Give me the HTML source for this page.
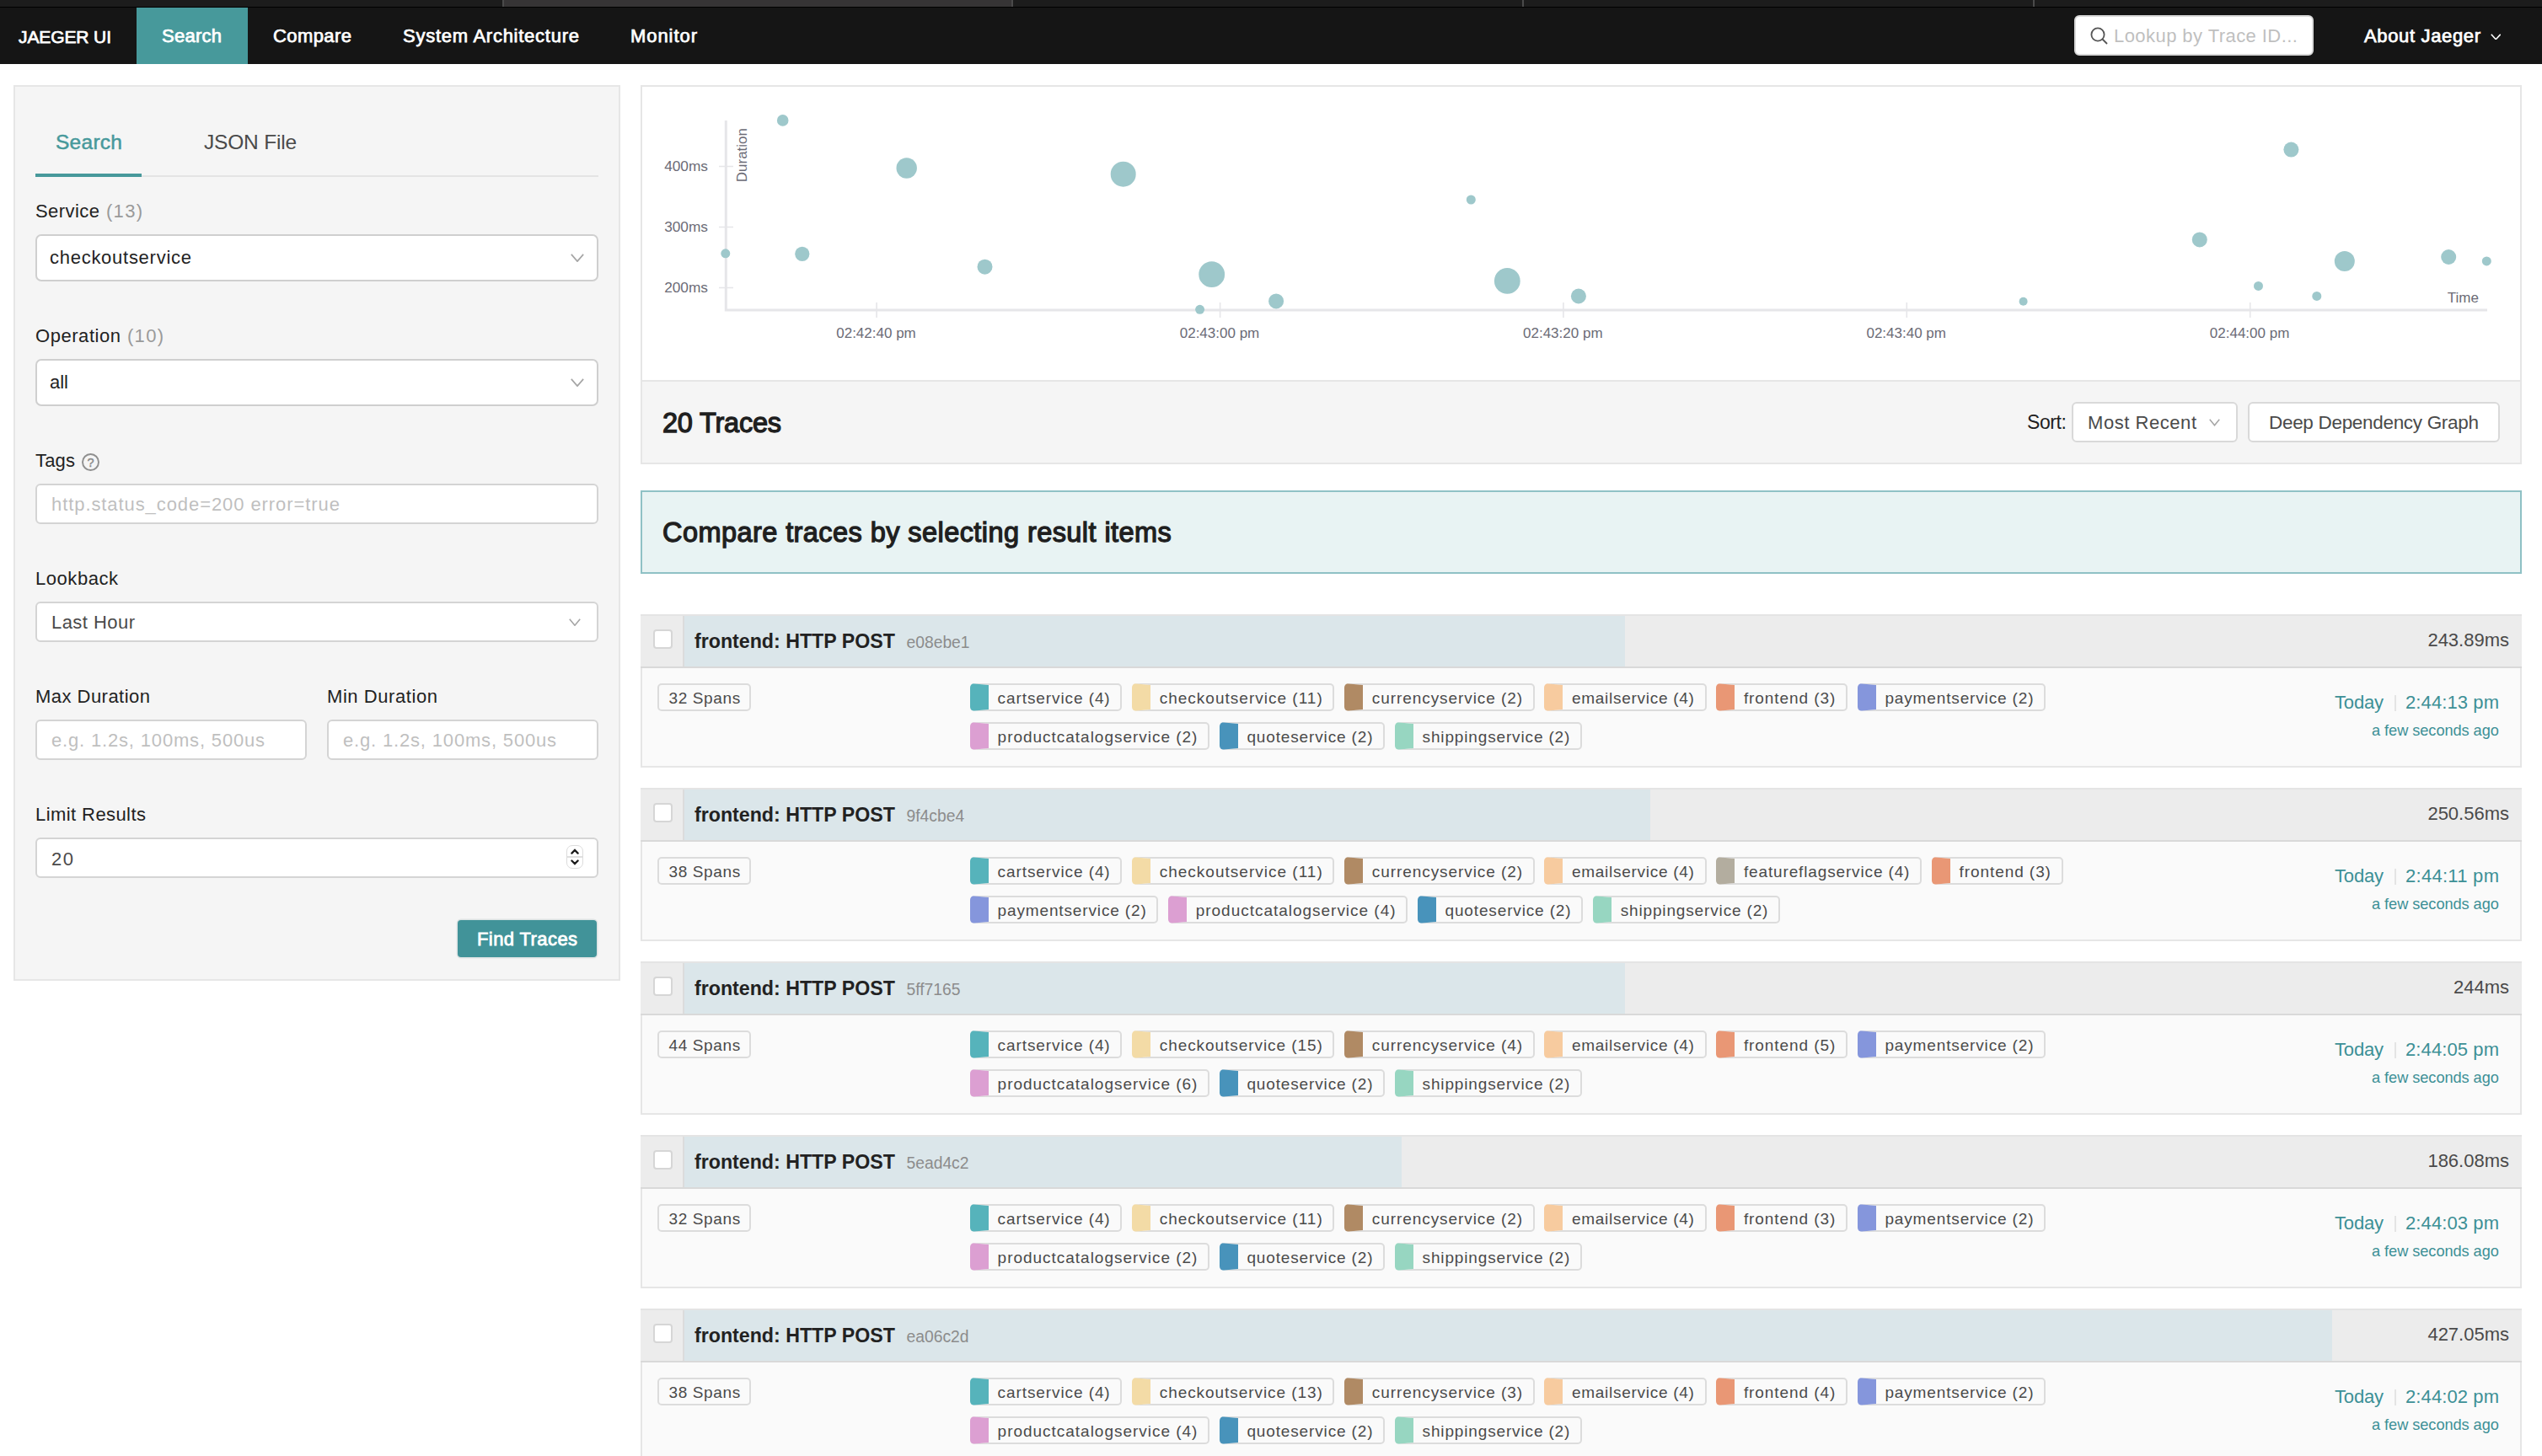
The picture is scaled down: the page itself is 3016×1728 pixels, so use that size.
<!DOCTYPE html>
<html lang="en"><head><meta charset="utf-8"><title>Jaeger UI</title>
<style>
html,body{margin:0;padding:0;background:#fff}
body{width:3016px;height:1728px;overflow:hidden;position:relative;font-family:"Liberation Sans",sans-serif}
body>div,body>span,body>svg{position:absolute;display:block}
body>span{white-space:nowrap}
</style></head><body>
<div style="left:0px;top:0px;width:3016px;height:8px;background:#1c1c1c"></div>
<div style="left:598px;top:0px;width:602px;height:8px;background:#363435"></div>
<div style="left:596px;top:0px;width:2px;height:8px;background:#4a4a4a"></div>
<div style="left:1200px;top:0px;width:2px;height:8px;background:#4a4a4a"></div>
<div style="left:1806px;top:0px;width:2px;height:8px;background:#4a4a4a"></div>
<div style="left:2412px;top:0px;width:2px;height:8px;background:#4a4a4a"></div>
<div style="left:0px;top:8px;width:3016px;height:1px;background:#000"></div>
<div style="left:0px;top:9px;width:3016px;height:67px;background:#151515"></div>
<div style="left:162px;top:9px;width:132px;height:67px;background:#47999b"></div>
<span style="left:22.0px;top:32.9px;font-size:21px;line-height:21px;color:#fff;letter-spacing:-0.11px;-webkit-text-stroke:0.75px #fff;">JAEGER UI</span>
<span style="left:192.0px;top:32.1px;font-size:22px;line-height:22px;color:#fff;letter-spacing:0.26px;-webkit-text-stroke:0.75px #fff;">Search</span>
<span style="left:324.0px;top:32.1px;font-size:22px;line-height:22px;color:#fff;letter-spacing:0.42px;-webkit-text-stroke:0.75px #fff;">Compare</span>
<span style="left:478.0px;top:32.1px;font-size:22px;line-height:22px;color:#fff;letter-spacing:0.74px;-webkit-text-stroke:0.75px #fff;">System Architecture</span>
<span style="left:748.0px;top:32.1px;font-size:22px;line-height:22px;color:#fff;letter-spacing:0.94px;-webkit-text-stroke:0.75px #fff;">Monitor</span>
<div style="left:2461px;top:18px;width:284px;height:48px;background:#fff;border-radius:6px;box-sizing:border-box;border:2px solid #d9d9d9"></div>
<svg style="left:2479px;top:31px" width="24" height="24" viewBox="0 0 24 24"><circle cx="10" cy="10" r="7.6" fill="none" stroke="#555" stroke-width="1.8"/><path d="M15.5 15.5 L21 21" stroke="#555" stroke-width="1.8" fill="none"/></svg>
<span style="left:2508.0px;top:32.1px;font-size:22px;line-height:22px;color:#bfbfbf;letter-spacing:0.44px;">Lookup by Trace ID...</span>
<span style="left:2805.0px;top:32.1px;font-size:22px;line-height:22px;color:#fff;letter-spacing:0.65px;-webkit-text-stroke:0.75px #fff;">About Jaeger</span>
<svg style="left:2954.5px;top:39.5px" width="12.5" height="7.5" viewBox="0 0 12.5 7.5"><path d="M0.8 0.8 L6.25 6.7 L11.7 0.8" fill="none" stroke="#fff" stroke-width="1.6" stroke-linejoin="miter"/></svg>
<div style="left:16px;top:101px;width:720px;height:1063px;background:#f5f5f5;border:2px solid #e6e6e6;box-sizing:border-box"></div>
<span style="left:66.0px;top:157.1px;font-size:24.5px;line-height:24.5px;color:#47999b;letter-spacing:0.27px;-webkit-text-stroke:0.5px #47999b;">Search</span>
<span style="left:242.0px;top:157.1px;font-size:24.5px;line-height:24.5px;color:#4a4a4a;letter-spacing:-0.20px;">JSON File</span>
<div style="left:42px;top:208px;width:668px;height:2px;background:#e4e4e4"></div>
<div style="left:42px;top:206px;width:126px;height:4px;background:#47999b"></div>
<span style="left:42.0px;top:240.4px;font-size:22px;line-height:22px;color:#222;letter-spacing:0.44px;">Service</span>
<span style="left:126.0px;top:240.4px;font-size:22px;line-height:22px;color:#9a9a9a;letter-spacing:1.29px;">(13)</span>
<div style="left:42px;top:278px;width:668px;height:56px;background:#fff;border:2px solid #cfcfcf;border-radius:7px;box-sizing:border-box"></div>
<span style="left:59.0px;top:294.6px;font-size:22px;line-height:22px;color:#222;letter-spacing:0.73px;">checkoutservice</span>
<svg style="left:677px;top:301px" width="16" height="10" viewBox="0 0 16 10"><path d="M0.85 0.85 L8.0 9.15 L15.15 0.85" fill="none" stroke="#a5a5a5" stroke-width="1.7" stroke-linejoin="miter"/></svg>
<span style="left:42.0px;top:388.4px;font-size:22px;line-height:22px;color:#222;letter-spacing:0.55px;">Operation</span>
<span style="left:151.0px;top:388.4px;font-size:22px;line-height:22px;color:#9a9a9a;letter-spacing:1.29px;">(10)</span>
<div style="left:42px;top:426px;width:668px;height:56px;background:#fff;border:2px solid #cfcfcf;border-radius:7px;box-sizing:border-box"></div>
<span style="left:59.0px;top:442.6px;font-size:22px;line-height:22px;color:#222;letter-spacing:-0.01px;">all</span>
<svg style="left:677px;top:449px" width="16" height="10" viewBox="0 0 16 10"><path d="M0.85 0.85 L8.0 9.15 L15.15 0.85" fill="none" stroke="#a5a5a5" stroke-width="1.7" stroke-linejoin="miter"/></svg>
<span style="left:42.0px;top:536.4px;font-size:22px;line-height:22px;color:#222;letter-spacing:0.18px;">Tags</span>
<svg style="left:96px;top:537px" width="23" height="23" viewBox="0 0 23 23"><circle cx="11.5" cy="11.5" r="9.5" fill="none" stroke="#8f8f8f" stroke-width="1.9"/></svg>
<span style="left:103.6px;top:541.5px;font-size:14.5px;line-height:14.5px;color:#8a8a8a;-webkit-text-stroke:0.4px #8a8a8a;">?</span>
<div style="left:42px;top:574px;width:668px;height:48px;background:#fff;border:2px solid #d4d4d4;border-radius:6px;box-sizing:border-box"></div>
<span style="left:61.0px;top:588.0px;font-size:22px;line-height:22px;color:#bfbfbf;letter-spacing:0.92px;">http.status_code=200 error=true</span>
<span style="left:42.0px;top:676.4px;font-size:22px;line-height:22px;color:#222;letter-spacing:0.55px;">Lookback</span>
<div style="left:42px;top:714px;width:668px;height:48px;background:#fff;border:2px solid #d4d4d4;border-radius:6px;box-sizing:border-box"></div>
<span style="left:61.0px;top:728.4px;font-size:22px;line-height:22px;color:#4a4a4a;letter-spacing:0.45px;">Last Hour</span>
<svg style="left:675px;top:734px" width="14" height="9" viewBox="0 0 14 9"><path d="M0.8 0.8 L7.0 8.2 L13.2 0.8" fill="none" stroke="#a5a5a5" stroke-width="1.6" stroke-linejoin="miter"/></svg>
<span style="left:42.0px;top:816.4px;font-size:22px;line-height:22px;color:#222;letter-spacing:0.47px;">Max Duration</span>
<span style="left:388.0px;top:816.4px;font-size:22px;line-height:22px;color:#222;letter-spacing:0.57px;">Min Duration</span>
<div style="left:42px;top:854px;width:322px;height:48px;background:#fff;border:2px solid #d4d4d4;border-radius:6px;box-sizing:border-box"></div>
<div style="left:388px;top:854px;width:322px;height:48px;background:#fff;border:2px solid #d4d4d4;border-radius:6px;box-sizing:border-box"></div>
<span style="left:61.0px;top:868.0px;font-size:22px;line-height:22px;color:#bfbfbf;letter-spacing:0.83px;">e.g. 1.2s, 100ms, 500us</span>
<span style="left:407.0px;top:868.0px;font-size:22px;line-height:22px;color:#bfbfbf;letter-spacing:0.83px;">e.g. 1.2s, 100ms, 500us</span>
<span style="left:42.0px;top:956.4px;font-size:22px;line-height:22px;color:#222;letter-spacing:0.42px;">Limit Results</span>
<div style="left:42px;top:994px;width:668px;height:48px;background:#fff;border:2px solid #d4d4d4;border-radius:6px;box-sizing:border-box"></div>
<span style="left:61.0px;top:1008.6px;font-size:22px;line-height:22px;color:#4a4a4a;letter-spacing:1.53px;">20</span>
<div style="left:672px;top:1003px;width:20px;height:28px;background:#fff;border:1px solid #dcdcdc;border-radius:7px;box-sizing:border-box"></div>
<div style="left:673px;top:1016px;width:18px;height:2px;background:#e0e0e0"></div>
<svg style="left:676px;top:1005px" width="12" height="24" viewBox="0 0 12 24"><path d="M2.4 7.6 L6 4 L9.6 7.6 M2.4 16.5 L6 20.1 L9.6 16.5" fill="none" stroke="#1c1c1c" stroke-width="2.3" stroke-linecap="round" stroke-linejoin="miter"/></svg>
<div style="left:543px;top:1092px;width:165px;height:44px;background:#419399;border-radius:4px;box-shadow:0 0 0 1.5px #dde3e3"></div>
<span style="left:566.0px;top:1104.0px;font-size:22px;line-height:22px;color:#fff;letter-spacing:0.41px;-webkit-text-stroke:0.8px #fff;">Find Traces</span>
<div style="left:760px;top:101px;width:2232px;height:450px;background:#fff;border:2px solid #e6e6e6;box-sizing:border-box"></div>
<div style="left:762px;top:451px;width:2228px;height:98px;background:#f5f5f5;border-top:2px solid #e6e6e6;box-sizing:border-box"></div>
<svg style="left:760px;top:101px" width="2232" height="350" viewBox="760 101 2232 350" font-family="Liberation Sans, sans-serif" font-size="17" fill="#6b6b76"><path d="M861.3 143 V368 H2951" fill="none" stroke="#e6e6e9" stroke-width="3"/><path d="M853 197.5 H870" stroke="#e6e6e9" stroke-width="1.6"/><text x="840" y="203.3" text-anchor="end" font-size="17.3">400ms</text><path d="M853 269.5 H870" stroke="#e6e6e9" stroke-width="1.6"/><text x="840" y="275.3" text-anchor="end" font-size="17.3">300ms</text><path d="M853 341.5 H870" stroke="#e6e6e9" stroke-width="1.6"/><text x="840" y="347.3" text-anchor="end" font-size="17.3">200ms</text><path d="M1040.1 359 V377" stroke="#e6e6e9" stroke-width="1.6"/><text x="1039.5" y="400.8" text-anchor="middle">02:42:40 pm</text><path d="M1447.6 359 V377" stroke="#e6e6e9" stroke-width="1.6"/><text x="1447" y="400.8" text-anchor="middle">02:43:00 pm</text><path d="M1854.8999999999999 359 V377" stroke="#e6e6e9" stroke-width="1.6"/><text x="1854.3" y="400.8" text-anchor="middle">02:43:20 pm</text><path d="M2262.2999999999997 359 V377" stroke="#e6e6e9" stroke-width="1.6"/><text x="2261.7" y="400.8" text-anchor="middle">02:43:40 pm</text><path d="M2669.7 359 V377" stroke="#e6e6e9" stroke-width="1.6"/><text x="2669.1" y="400.8" text-anchor="middle">02:44:00 pm</text><text transform="translate(885.5 152) rotate(-90)" text-anchor="end">Duration</text><text x="2941" y="359" text-anchor="end">Time</text><circle cx="928.7" cy="142.9" r="6.8" fill="#9ec8cb"/><circle cx="1075.7" cy="199.5" r="12.2" fill="#9ec8cb"/><circle cx="1332.7" cy="206.7" r="15" fill="#9ec8cb"/><circle cx="1745.3" cy="237" r="5.5" fill="#9ec8cb"/><circle cx="860.8" cy="300.8" r="5.5" fill="#9ec8cb"/><circle cx="951.8" cy="301.3" r="8.6" fill="#9ec8cb"/><circle cx="1168.5" cy="316.7" r="9" fill="#9ec8cb"/><circle cx="1437.7" cy="325.7" r="15.4" fill="#9ec8cb"/><circle cx="1788.3" cy="333.4" r="15.4" fill="#9ec8cb"/><circle cx="1872.9" cy="351.5" r="9" fill="#9ec8cb"/><circle cx="1514.1" cy="357.4" r="9" fill="#9ec8cb"/><circle cx="1423.6" cy="367.3" r="5.5" fill="#9ec8cb"/><circle cx="2718.4" cy="177.6" r="9" fill="#9ec8cb"/><circle cx="2609.8" cy="284.4" r="9" fill="#9ec8cb"/><circle cx="2781.8" cy="309.9" r="12" fill="#9ec8cb"/><circle cx="2905.2" cy="305" r="9" fill="#9ec8cb"/><circle cx="2950.3" cy="309.9" r="5.5" fill="#9ec8cb"/><circle cx="2679.5" cy="339.4" r="5.5" fill="#9ec8cb"/><circle cx="2748.8" cy="351.4" r="5.5" fill="#9ec8cb"/><circle cx="2400.6" cy="357.7" r="5" fill="#9ec8cb"/></svg>
<span style="left:786.0px;top:485.5px;font-size:32.5px;line-height:32.5px;color:#1f1f1f;letter-spacing:-0.21px;-webkit-text-stroke:1.3px #1f1f1f;">20 Traces</span>
<span style="left:2405.0px;top:489.5px;font-size:23px;line-height:23px;color:#1f1f1f;letter-spacing:-0.39px;">Sort:</span>
<div style="left:2458px;top:477px;width:197px;height:48px;background:#fff;border:2px solid #d9d9d9;border-radius:6px;box-sizing:border-box"></div>
<span style="left:2477.0px;top:491.2px;font-size:22px;line-height:22px;color:#4a4a4a;letter-spacing:0.55px;">Most Recent</span>
<svg style="left:2621px;top:497px" width="13" height="8.5" viewBox="0 0 13 8.5"><path d="M0.75 0.75 L6.5 7.75 L12.25 0.75" fill="none" stroke="#a5a5a5" stroke-width="1.5" stroke-linejoin="miter"/></svg>
<div style="left:2667px;top:477px;width:299px;height:48px;background:#fff;border:2px solid #d9d9d9;border-radius:6px;box-sizing:border-box"></div>
<span style="left:2692.0px;top:490.8px;font-size:22.5px;line-height:22.5px;color:#4a4a4a;letter-spacing:-0.31px;">Deep Dependency Graph</span>
<div style="left:760px;top:582px;width:2232px;height:99px;background:#e8f3f3;border:2px solid #8fc1c5;box-sizing:border-box"></div>
<span style="left:786.0px;top:615.5px;font-size:32.5px;line-height:32.5px;color:#1f1f1f;letter-spacing:0.43px;-webkit-text-stroke:1.3px #1f1f1f;">Compare traces by selecting result items</span>
<div style="left:760px;top:729px;width:2232px;height:182px;background:#fafafa;border:2px solid #e6e6e6;box-sizing:border-box"></div>
<div style="left:760px;top:729px;width:2232px;height:62px;background:#ececec;border-top:2px solid #e4e4e4;box-sizing:border-box"></div>
<div style="left:760px;top:791px;width:2232px;height:2px;background:#d9d9d9"></div>
<div style="left:810px;top:731px;width:1118px;height:60px;background:#dbe6ea;border-left:2px solid #dcdcdc;box-sizing:border-box"></div>
<div style="left:775px;top:747px;width:23px;height:23px;background:#fff;border:2px solid #d6d6d6;border-radius:4px;box-sizing:border-box"></div>
<span style="left:824.0px;top:750.1px;font-size:23.2px;line-height:23.2px;color:#222;font-weight:bold;">frontend: HTTP POST</span>
<span style="left:1075.5px;top:753.2px;font-size:19.3px;line-height:19.3px;color:#8c8c8c;">e08ebe1</span>
<span style="left:2880.4px;top:749.4px;font-size:22px;line-height:22px;color:#4a4a4a;">243.89ms</span>
<div style="left:780px;top:811px;width:111px;height:33px;background:#fafafa;border:2px solid #dcdcdc;border-radius:5px;box-sizing:border-box"></div>
<span style="left:793.5px;top:818.7px;font-size:19px;line-height:19px;color:#4a4a4a;letter-spacing:0.62px;">32 Spans</span>
<div style="left:1151.0px;top:811px;width:180.4px;height:33px;background:#fafafa;border:2px solid #dcdcdc;border-left:22px solid #56b3bb;border-radius:5px;box-sizing:border-box"></div>
<span style="left:1183.6px;top:818.7px;font-size:19px;line-height:19px;color:#4a4a4a;letter-spacing:0.91px;">cartservice (4)</span>
<div style="left:1343.1px;top:811px;width:240.4px;height:33px;background:#fafafa;border:2px solid #dcdcdc;border-left:22px solid #f3dba6;border-radius:5px;box-sizing:border-box"></div>
<span style="left:1375.7px;top:818.7px;font-size:19px;line-height:19px;color:#4a4a4a;letter-spacing:1.01px;">checkoutservice (11)</span>
<div style="left:1595.2px;top:811px;width:225.5px;height:33px;background:#fafafa;border:2px solid #dcdcdc;border-left:22px solid #b08a64;border-radius:5px;box-sizing:border-box"></div>
<span style="left:1627.8px;top:818.7px;font-size:19px;line-height:19px;color:#4a4a4a;letter-spacing:0.93px;">currencyservice (2)</span>
<div style="left:1832.4px;top:811px;width:192.2px;height:33px;background:#fafafa;border:2px solid #dcdcdc;border-left:22px solid #f7cb9f;border-radius:5px;box-sizing:border-box"></div>
<span style="left:1865.0px;top:818.7px;font-size:19px;line-height:19px;color:#4a4a4a;letter-spacing:0.72px;">emailservice (4)</span>
<div style="left:2036.3px;top:811px;width:155.8px;height:33px;background:#fafafa;border:2px solid #dcdcdc;border-left:22px solid #e99775;border-radius:5px;box-sizing:border-box"></div>
<span style="left:2068.9px;top:818.7px;font-size:19px;line-height:19px;color:#4a4a4a;letter-spacing:0.93px;">frontend (3)</span>
<div style="left:2203.8px;top:811px;width:223.4px;height:33px;background:#fafafa;border:2px solid #dcdcdc;border-left:22px solid #8596dc;border-radius:5px;box-sizing:border-box"></div>
<span style="left:2236.4px;top:818.7px;font-size:19px;line-height:19px;color:#4a4a4a;letter-spacing:0.86px;">paymentservice (2)</span>
<div style="left:1151.0px;top:857px;width:284.1px;height:33px;background:#fafafa;border:2px solid #dcdcdc;border-left:22px solid #dc9fd2;border-radius:5px;box-sizing:border-box"></div>
<span style="left:1183.6px;top:864.7px;font-size:19px;line-height:19px;color:#4a4a4a;letter-spacing:0.98px;">productcatalogservice (2)</span>
<div style="left:1446.8px;top:857px;width:196.5px;height:33px;background:#fafafa;border:2px solid #dcdcdc;border-left:22px solid #4893bb;border-radius:5px;box-sizing:border-box"></div>
<span style="left:1479.4px;top:864.7px;font-size:19px;line-height:19px;color:#4a4a4a;letter-spacing:0.86px;">quoteservice (2)</span>
<div style="left:1655.0px;top:857px;width:222.1px;height:33px;background:#fafafa;border:2px solid #dcdcdc;border-left:22px solid #97d6c1;border-radius:5px;box-sizing:border-box"></div>
<span style="left:1687.6px;top:864.7px;font-size:19px;line-height:19px;color:#4a4a4a;letter-spacing:0.85px;">shippingservice (2)</span>
<span style="left:2770.0px;top:823.0px;font-size:22px;line-height:22px;color:#3d9096;letter-spacing:-0.18px;">Today</span>
<div style="left:2841px;top:825px;width:2px;height:19px;background:#e4e4e4"></div>
<span style="left:2854.0px;top:823.0px;font-size:22px;line-height:22px;color:#3d9096;letter-spacing:0.10px;">2:44:13 pm</span>
<span style="left:2814.0px;top:857.6px;font-size:18.2px;line-height:18.2px;color:#3d9096;letter-spacing:-0.05px;">a few seconds ago</span>
<div style="left:760px;top:935px;width:2232px;height:182px;background:#fafafa;border:2px solid #e6e6e6;box-sizing:border-box"></div>
<div style="left:760px;top:935px;width:2232px;height:62px;background:#ececec;border-top:2px solid #e4e4e4;box-sizing:border-box"></div>
<div style="left:760px;top:997px;width:2232px;height:2px;background:#d9d9d9"></div>
<div style="left:810px;top:937px;width:1148px;height:60px;background:#dbe6ea;border-left:2px solid #dcdcdc;box-sizing:border-box"></div>
<div style="left:775px;top:953px;width:23px;height:23px;background:#fff;border:2px solid #d6d6d6;border-radius:4px;box-sizing:border-box"></div>
<span style="left:824.0px;top:956.1px;font-size:23.2px;line-height:23.2px;color:#222;font-weight:bold;">frontend: HTTP POST</span>
<span style="left:1075.5px;top:959.2px;font-size:19.3px;line-height:19.3px;color:#8c8c8c;">9f4cbe4</span>
<span style="left:2880.4px;top:955.4px;font-size:22px;line-height:22px;color:#4a4a4a;">250.56ms</span>
<div style="left:780px;top:1017px;width:111px;height:33px;background:#fafafa;border:2px solid #dcdcdc;border-radius:5px;box-sizing:border-box"></div>
<span style="left:793.5px;top:1024.7px;font-size:19px;line-height:19px;color:#4a4a4a;letter-spacing:0.62px;">38 Spans</span>
<div style="left:1151.0px;top:1017px;width:180.4px;height:33px;background:#fafafa;border:2px solid #dcdcdc;border-left:22px solid #56b3bb;border-radius:5px;box-sizing:border-box"></div>
<span style="left:1183.6px;top:1024.7px;font-size:19px;line-height:19px;color:#4a4a4a;letter-spacing:0.91px;">cartservice (4)</span>
<div style="left:1343.1px;top:1017px;width:240.4px;height:33px;background:#fafafa;border:2px solid #dcdcdc;border-left:22px solid #f3dba6;border-radius:5px;box-sizing:border-box"></div>
<span style="left:1375.7px;top:1024.7px;font-size:19px;line-height:19px;color:#4a4a4a;letter-spacing:1.01px;">checkoutservice (11)</span>
<div style="left:1595.2px;top:1017px;width:225.5px;height:33px;background:#fafafa;border:2px solid #dcdcdc;border-left:22px solid #b08a64;border-radius:5px;box-sizing:border-box"></div>
<span style="left:1627.8px;top:1024.7px;font-size:19px;line-height:19px;color:#4a4a4a;letter-spacing:0.93px;">currencyservice (2)</span>
<div style="left:1832.4px;top:1017px;width:192.2px;height:33px;background:#fafafa;border:2px solid #dcdcdc;border-left:22px solid #f7cb9f;border-radius:5px;box-sizing:border-box"></div>
<span style="left:1865.0px;top:1024.7px;font-size:19px;line-height:19px;color:#4a4a4a;letter-spacing:0.72px;">emailservice (4)</span>
<div style="left:2036.3px;top:1017px;width:243.9px;height:33px;background:#fafafa;border:2px solid #dcdcdc;border-left:22px solid #b3ad9f;border-radius:5px;box-sizing:border-box"></div>
<span style="left:2068.9px;top:1024.7px;font-size:19px;line-height:19px;color:#4a4a4a;letter-spacing:0.86px;">featureflagservice (4)</span>
<div style="left:2291.9px;top:1017px;width:155.8px;height:33px;background:#fafafa;border:2px solid #dcdcdc;border-left:22px solid #e99775;border-radius:5px;box-sizing:border-box"></div>
<span style="left:2324.5px;top:1024.7px;font-size:19px;line-height:19px;color:#4a4a4a;letter-spacing:0.93px;">frontend (3)</span>
<div style="left:1151.0px;top:1063px;width:223.4px;height:33px;background:#fafafa;border:2px solid #dcdcdc;border-left:22px solid #8596dc;border-radius:5px;box-sizing:border-box"></div>
<span style="left:1183.6px;top:1070.7px;font-size:19px;line-height:19px;color:#4a4a4a;letter-spacing:0.86px;">paymentservice (2)</span>
<div style="left:1386.1px;top:1063px;width:284.1px;height:33px;background:#fafafa;border:2px solid #dcdcdc;border-left:22px solid #dc9fd2;border-radius:5px;box-sizing:border-box"></div>
<span style="left:1418.7px;top:1070.7px;font-size:19px;line-height:19px;color:#4a4a4a;letter-spacing:0.98px;">productcatalogservice (4)</span>
<div style="left:1681.9px;top:1063px;width:196.5px;height:33px;background:#fafafa;border:2px solid #dcdcdc;border-left:22px solid #4893bb;border-radius:5px;box-sizing:border-box"></div>
<span style="left:1714.5px;top:1070.7px;font-size:19px;line-height:19px;color:#4a4a4a;letter-spacing:0.86px;">quoteservice (2)</span>
<div style="left:1890.1px;top:1063px;width:222.1px;height:33px;background:#fafafa;border:2px solid #dcdcdc;border-left:22px solid #97d6c1;border-radius:5px;box-sizing:border-box"></div>
<span style="left:1922.7px;top:1070.7px;font-size:19px;line-height:19px;color:#4a4a4a;letter-spacing:0.85px;">shippingservice (2)</span>
<span style="left:2770.0px;top:1029.0px;font-size:22px;line-height:22px;color:#3d9096;letter-spacing:-0.18px;">Today</span>
<div style="left:2841px;top:1031px;width:2px;height:19px;background:#e4e4e4"></div>
<span style="left:2854.0px;top:1029.0px;font-size:22px;line-height:22px;color:#3d9096;letter-spacing:0.28px;">2:44:11 pm</span>
<span style="left:2814.0px;top:1063.6px;font-size:18.2px;line-height:18.2px;color:#3d9096;letter-spacing:-0.05px;">a few seconds ago</span>
<div style="left:760px;top:1141px;width:2232px;height:182px;background:#fafafa;border:2px solid #e6e6e6;box-sizing:border-box"></div>
<div style="left:760px;top:1141px;width:2232px;height:62px;background:#ececec;border-top:2px solid #e4e4e4;box-sizing:border-box"></div>
<div style="left:760px;top:1203px;width:2232px;height:2px;background:#d9d9d9"></div>
<div style="left:810px;top:1143px;width:1118px;height:60px;background:#dbe6ea;border-left:2px solid #dcdcdc;box-sizing:border-box"></div>
<div style="left:775px;top:1159px;width:23px;height:23px;background:#fff;border:2px solid #d6d6d6;border-radius:4px;box-sizing:border-box"></div>
<span style="left:824.0px;top:1162.1px;font-size:23.2px;line-height:23.2px;color:#222;font-weight:bold;">frontend: HTTP POST</span>
<span style="left:1075.5px;top:1165.2px;font-size:19.3px;line-height:19.3px;color:#8c8c8c;">5ff7165</span>
<span style="left:2911.0px;top:1161.4px;font-size:22px;line-height:22px;color:#4a4a4a;">244ms</span>
<div style="left:780px;top:1223px;width:111px;height:33px;background:#fafafa;border:2px solid #dcdcdc;border-radius:5px;box-sizing:border-box"></div>
<span style="left:793.5px;top:1230.7px;font-size:19px;line-height:19px;color:#4a4a4a;letter-spacing:0.62px;">44 Spans</span>
<div style="left:1151.0px;top:1223px;width:180.4px;height:33px;background:#fafafa;border:2px solid #dcdcdc;border-left:22px solid #56b3bb;border-radius:5px;box-sizing:border-box"></div>
<span style="left:1183.6px;top:1230.7px;font-size:19px;line-height:19px;color:#4a4a4a;letter-spacing:0.91px;">cartservice (4)</span>
<div style="left:1343.1px;top:1223px;width:240.4px;height:33px;background:#fafafa;border:2px solid #dcdcdc;border-left:22px solid #f3dba6;border-radius:5px;box-sizing:border-box"></div>
<span style="left:1375.7px;top:1230.7px;font-size:19px;line-height:19px;color:#4a4a4a;letter-spacing:0.94px;">checkoutservice (15)</span>
<div style="left:1595.2px;top:1223px;width:225.5px;height:33px;background:#fafafa;border:2px solid #dcdcdc;border-left:22px solid #b08a64;border-radius:5px;box-sizing:border-box"></div>
<span style="left:1627.8px;top:1230.7px;font-size:19px;line-height:19px;color:#4a4a4a;letter-spacing:0.93px;">currencyservice (4)</span>
<div style="left:1832.4px;top:1223px;width:192.2px;height:33px;background:#fafafa;border:2px solid #dcdcdc;border-left:22px solid #f7cb9f;border-radius:5px;box-sizing:border-box"></div>
<span style="left:1865.0px;top:1230.7px;font-size:19px;line-height:19px;color:#4a4a4a;letter-spacing:0.72px;">emailservice (4)</span>
<div style="left:2036.3px;top:1223px;width:155.8px;height:33px;background:#fafafa;border:2px solid #dcdcdc;border-left:22px solid #e99775;border-radius:5px;box-sizing:border-box"></div>
<span style="left:2068.9px;top:1230.7px;font-size:19px;line-height:19px;color:#4a4a4a;letter-spacing:0.93px;">frontend (5)</span>
<div style="left:2203.8px;top:1223px;width:223.4px;height:33px;background:#fafafa;border:2px solid #dcdcdc;border-left:22px solid #8596dc;border-radius:5px;box-sizing:border-box"></div>
<span style="left:2236.4px;top:1230.7px;font-size:19px;line-height:19px;color:#4a4a4a;letter-spacing:0.86px;">paymentservice (2)</span>
<div style="left:1151.0px;top:1269px;width:284.1px;height:33px;background:#fafafa;border:2px solid #dcdcdc;border-left:22px solid #dc9fd2;border-radius:5px;box-sizing:border-box"></div>
<span style="left:1183.6px;top:1276.7px;font-size:19px;line-height:19px;color:#4a4a4a;letter-spacing:0.98px;">productcatalogservice (6)</span>
<div style="left:1446.8px;top:1269px;width:196.5px;height:33px;background:#fafafa;border:2px solid #dcdcdc;border-left:22px solid #4893bb;border-radius:5px;box-sizing:border-box"></div>
<span style="left:1479.4px;top:1276.7px;font-size:19px;line-height:19px;color:#4a4a4a;letter-spacing:0.86px;">quoteservice (2)</span>
<div style="left:1655.0px;top:1269px;width:222.1px;height:33px;background:#fafafa;border:2px solid #dcdcdc;border-left:22px solid #97d6c1;border-radius:5px;box-sizing:border-box"></div>
<span style="left:1687.6px;top:1276.7px;font-size:19px;line-height:19px;color:#4a4a4a;letter-spacing:0.85px;">shippingservice (2)</span>
<span style="left:2770.0px;top:1235.0px;font-size:22px;line-height:22px;color:#3d9096;letter-spacing:-0.18px;">Today</span>
<div style="left:2841px;top:1237px;width:2px;height:19px;background:#e4e4e4"></div>
<span style="left:2854.0px;top:1235.0px;font-size:22px;line-height:22px;color:#3d9096;letter-spacing:0.10px;">2:44:05 pm</span>
<span style="left:2814.0px;top:1269.6px;font-size:18.2px;line-height:18.2px;color:#3d9096;letter-spacing:-0.05px;">a few seconds ago</span>
<div style="left:760px;top:1347px;width:2232px;height:182px;background:#fafafa;border:2px solid #e6e6e6;box-sizing:border-box"></div>
<div style="left:760px;top:1347px;width:2232px;height:62px;background:#ececec;border-top:2px solid #e4e4e4;box-sizing:border-box"></div>
<div style="left:760px;top:1409px;width:2232px;height:2px;background:#d9d9d9"></div>
<div style="left:810px;top:1349px;width:853px;height:60px;background:#dbe6ea;border-left:2px solid #dcdcdc;box-sizing:border-box"></div>
<div style="left:775px;top:1365px;width:23px;height:23px;background:#fff;border:2px solid #d6d6d6;border-radius:4px;box-sizing:border-box"></div>
<span style="left:824.0px;top:1368.1px;font-size:23.2px;line-height:23.2px;color:#222;font-weight:bold;">frontend: HTTP POST</span>
<span style="left:1075.5px;top:1371.2px;font-size:19.3px;line-height:19.3px;color:#8c8c8c;">5ead4c2</span>
<span style="left:2880.4px;top:1367.4px;font-size:22px;line-height:22px;color:#4a4a4a;">186.08ms</span>
<div style="left:780px;top:1429px;width:111px;height:33px;background:#fafafa;border:2px solid #dcdcdc;border-radius:5px;box-sizing:border-box"></div>
<span style="left:793.5px;top:1436.7px;font-size:19px;line-height:19px;color:#4a4a4a;letter-spacing:0.62px;">32 Spans</span>
<div style="left:1151.0px;top:1429px;width:180.4px;height:33px;background:#fafafa;border:2px solid #dcdcdc;border-left:22px solid #56b3bb;border-radius:5px;box-sizing:border-box"></div>
<span style="left:1183.6px;top:1436.7px;font-size:19px;line-height:19px;color:#4a4a4a;letter-spacing:0.91px;">cartservice (4)</span>
<div style="left:1343.1px;top:1429px;width:240.4px;height:33px;background:#fafafa;border:2px solid #dcdcdc;border-left:22px solid #f3dba6;border-radius:5px;box-sizing:border-box"></div>
<span style="left:1375.7px;top:1436.7px;font-size:19px;line-height:19px;color:#4a4a4a;letter-spacing:1.01px;">checkoutservice (11)</span>
<div style="left:1595.2px;top:1429px;width:225.5px;height:33px;background:#fafafa;border:2px solid #dcdcdc;border-left:22px solid #b08a64;border-radius:5px;box-sizing:border-box"></div>
<span style="left:1627.8px;top:1436.7px;font-size:19px;line-height:19px;color:#4a4a4a;letter-spacing:0.93px;">currencyservice (2)</span>
<div style="left:1832.4px;top:1429px;width:192.2px;height:33px;background:#fafafa;border:2px solid #dcdcdc;border-left:22px solid #f7cb9f;border-radius:5px;box-sizing:border-box"></div>
<span style="left:1865.0px;top:1436.7px;font-size:19px;line-height:19px;color:#4a4a4a;letter-spacing:0.72px;">emailservice (4)</span>
<div style="left:2036.3px;top:1429px;width:155.8px;height:33px;background:#fafafa;border:2px solid #dcdcdc;border-left:22px solid #e99775;border-radius:5px;box-sizing:border-box"></div>
<span style="left:2068.9px;top:1436.7px;font-size:19px;line-height:19px;color:#4a4a4a;letter-spacing:0.93px;">frontend (3)</span>
<div style="left:2203.8px;top:1429px;width:223.4px;height:33px;background:#fafafa;border:2px solid #dcdcdc;border-left:22px solid #8596dc;border-radius:5px;box-sizing:border-box"></div>
<span style="left:2236.4px;top:1436.7px;font-size:19px;line-height:19px;color:#4a4a4a;letter-spacing:0.86px;">paymentservice (2)</span>
<div style="left:1151.0px;top:1475px;width:284.1px;height:33px;background:#fafafa;border:2px solid #dcdcdc;border-left:22px solid #dc9fd2;border-radius:5px;box-sizing:border-box"></div>
<span style="left:1183.6px;top:1482.7px;font-size:19px;line-height:19px;color:#4a4a4a;letter-spacing:0.98px;">productcatalogservice (2)</span>
<div style="left:1446.8px;top:1475px;width:196.5px;height:33px;background:#fafafa;border:2px solid #dcdcdc;border-left:22px solid #4893bb;border-radius:5px;box-sizing:border-box"></div>
<span style="left:1479.4px;top:1482.7px;font-size:19px;line-height:19px;color:#4a4a4a;letter-spacing:0.86px;">quoteservice (2)</span>
<div style="left:1655.0px;top:1475px;width:222.1px;height:33px;background:#fafafa;border:2px solid #dcdcdc;border-left:22px solid #97d6c1;border-radius:5px;box-sizing:border-box"></div>
<span style="left:1687.6px;top:1482.7px;font-size:19px;line-height:19px;color:#4a4a4a;letter-spacing:0.85px;">shippingservice (2)</span>
<span style="left:2770.0px;top:1441.0px;font-size:22px;line-height:22px;color:#3d9096;letter-spacing:-0.18px;">Today</span>
<div style="left:2841px;top:1443px;width:2px;height:19px;background:#e4e4e4"></div>
<span style="left:2854.0px;top:1441.0px;font-size:22px;line-height:22px;color:#3d9096;letter-spacing:0.10px;">2:44:03 pm</span>
<span style="left:2814.0px;top:1475.6px;font-size:18.2px;line-height:18.2px;color:#3d9096;letter-spacing:-0.05px;">a few seconds ago</span>
<div style="left:760px;top:1553px;width:2232px;height:182px;background:#fafafa;border:2px solid #e6e6e6;box-sizing:border-box"></div>
<div style="left:760px;top:1553px;width:2232px;height:62px;background:#ececec;border-top:2px solid #e4e4e4;box-sizing:border-box"></div>
<div style="left:760px;top:1615px;width:2232px;height:2px;background:#d9d9d9"></div>
<div style="left:810px;top:1555px;width:1957px;height:60px;background:#dbe6ea;border-left:2px solid #dcdcdc;box-sizing:border-box"></div>
<div style="left:775px;top:1571px;width:23px;height:23px;background:#fff;border:2px solid #d6d6d6;border-radius:4px;box-sizing:border-box"></div>
<span style="left:824.0px;top:1574.1px;font-size:23.2px;line-height:23.2px;color:#222;font-weight:bold;">frontend: HTTP POST</span>
<span style="left:1075.5px;top:1577.2px;font-size:19.3px;line-height:19.3px;color:#8c8c8c;">ea06c2d</span>
<span style="left:2880.4px;top:1573.4px;font-size:22px;line-height:22px;color:#4a4a4a;">427.05ms</span>
<div style="left:780px;top:1635px;width:111px;height:33px;background:#fafafa;border:2px solid #dcdcdc;border-radius:5px;box-sizing:border-box"></div>
<span style="left:793.5px;top:1642.7px;font-size:19px;line-height:19px;color:#4a4a4a;letter-spacing:0.62px;">38 Spans</span>
<div style="left:1151.0px;top:1635px;width:180.4px;height:33px;background:#fafafa;border:2px solid #dcdcdc;border-left:22px solid #56b3bb;border-radius:5px;box-sizing:border-box"></div>
<span style="left:1183.6px;top:1642.7px;font-size:19px;line-height:19px;color:#4a4a4a;letter-spacing:0.91px;">cartservice (4)</span>
<div style="left:1343.1px;top:1635px;width:240.4px;height:33px;background:#fafafa;border:2px solid #dcdcdc;border-left:22px solid #f3dba6;border-radius:5px;box-sizing:border-box"></div>
<span style="left:1375.7px;top:1642.7px;font-size:19px;line-height:19px;color:#4a4a4a;letter-spacing:0.94px;">checkoutservice (13)</span>
<div style="left:1595.2px;top:1635px;width:225.5px;height:33px;background:#fafafa;border:2px solid #dcdcdc;border-left:22px solid #b08a64;border-radius:5px;box-sizing:border-box"></div>
<span style="left:1627.8px;top:1642.7px;font-size:19px;line-height:19px;color:#4a4a4a;letter-spacing:0.93px;">currencyservice (3)</span>
<div style="left:1832.4px;top:1635px;width:192.2px;height:33px;background:#fafafa;border:2px solid #dcdcdc;border-left:22px solid #f7cb9f;border-radius:5px;box-sizing:border-box"></div>
<span style="left:1865.0px;top:1642.7px;font-size:19px;line-height:19px;color:#4a4a4a;letter-spacing:0.72px;">emailservice (4)</span>
<div style="left:2036.3px;top:1635px;width:155.8px;height:33px;background:#fafafa;border:2px solid #dcdcdc;border-left:22px solid #e99775;border-radius:5px;box-sizing:border-box"></div>
<span style="left:2068.9px;top:1642.7px;font-size:19px;line-height:19px;color:#4a4a4a;letter-spacing:0.93px;">frontend (4)</span>
<div style="left:2203.8px;top:1635px;width:223.4px;height:33px;background:#fafafa;border:2px solid #dcdcdc;border-left:22px solid #8596dc;border-radius:5px;box-sizing:border-box"></div>
<span style="left:2236.4px;top:1642.7px;font-size:19px;line-height:19px;color:#4a4a4a;letter-spacing:0.86px;">paymentservice (2)</span>
<div style="left:1151.0px;top:1681px;width:284.1px;height:33px;background:#fafafa;border:2px solid #dcdcdc;border-left:22px solid #dc9fd2;border-radius:5px;box-sizing:border-box"></div>
<span style="left:1183.6px;top:1688.7px;font-size:19px;line-height:19px;color:#4a4a4a;letter-spacing:0.98px;">productcatalogservice (4)</span>
<div style="left:1446.8px;top:1681px;width:196.5px;height:33px;background:#fafafa;border:2px solid #dcdcdc;border-left:22px solid #4893bb;border-radius:5px;box-sizing:border-box"></div>
<span style="left:1479.4px;top:1688.7px;font-size:19px;line-height:19px;color:#4a4a4a;letter-spacing:0.86px;">quoteservice (2)</span>
<div style="left:1655.0px;top:1681px;width:222.1px;height:33px;background:#fafafa;border:2px solid #dcdcdc;border-left:22px solid #97d6c1;border-radius:5px;box-sizing:border-box"></div>
<span style="left:1687.6px;top:1688.7px;font-size:19px;line-height:19px;color:#4a4a4a;letter-spacing:0.85px;">shippingservice (2)</span>
<span style="left:2770.0px;top:1647.0px;font-size:22px;line-height:22px;color:#3d9096;letter-spacing:-0.18px;">Today</span>
<div style="left:2841px;top:1649px;width:2px;height:19px;background:#e4e4e4"></div>
<span style="left:2854.0px;top:1647.0px;font-size:22px;line-height:22px;color:#3d9096;letter-spacing:0.10px;">2:44:02 pm</span>
<span style="left:2814.0px;top:1681.6px;font-size:18.2px;line-height:18.2px;color:#3d9096;letter-spacing:-0.05px;">a few seconds ago</span>
</body></html>
